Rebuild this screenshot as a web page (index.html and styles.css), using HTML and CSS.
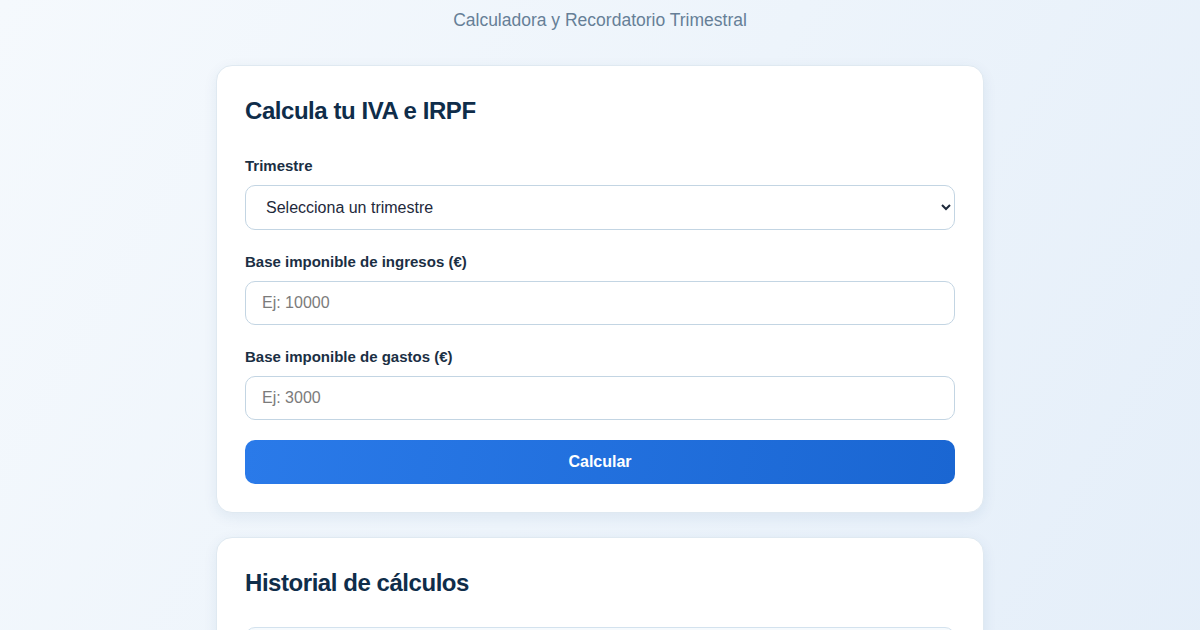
FILE: index.html
```html
<!DOCTYPE html>
<html lang="es">
<head>
    <meta charset="UTF-8">
    <meta name="viewport" content="width=device-width, initial-scale=1.0">
    <title>Calculadora IVA e IRPF</title>
    <link rel="stylesheet" href="styles.css">
</head>
<body>

<p class="subtitle">Calculadora y Recordatorio Trimestral</p>

<main class="container">
    <!-- Formulario de cálculo -->
    <section class="card">
        <h2 class="card-title">Calcula tu IVA e IRPF</h2>

        <div class="form-group">
            <label for="quarter">Trimestre</label>
            <select id="quarter" class="field">
                <option value="">Selecciona un trimestre</option>
                <option value="1">1T (enero - marzo)</option>
                <option value="2">2T (abril - junio)</option>
                <option value="3">3T (julio - septiembre)</option>
                <option value="4">4T (octubre - diciembre)</option>
            </select>
        </div>

        <div class="form-group">
            <label for="income">Base imponible de ingresos (€)</label>
            <input id="income" class="field" type="number" placeholder="Ej: 10000">
        </div>

        <div class="form-group last">
            <label for="expenses">Base imponible de gastos (€)</label>
            <input id="expenses" class="field" type="number" placeholder="Ej: 3000">
        </div>

        <button class="btn-primary" type="button">Calcular</button>
    </section>

    <!-- Historial -->
    <section class="card">
        <h2 class="card-title">Historial de cálculos</h2>
        <div class="history-empty">Todavía no hay cálculos guardados.</div>
    </section>
</main>

</body>
</html>
```

FILE: styles.css
```css
* {
    box-sizing: border-box;
}

body {
    font-family: "Liberation Sans", Arial, sans-serif;
    margin: 0;
    padding: 0;
    min-height: 100vh;
    color: #0f2d4a;
    background: linear-gradient(120deg, #f5f9fd 0%, #edf4fb 50%, #e4eef9 100%);
}

.subtitle {
    margin: 0;
    padding-top: 9px;
    text-align: center;
    font-size: 17.5px;
    line-height: 22px;
    color: #667f97;
}

.container {
    width: 768px;
    margin: 34px auto 0;
    display: flex;
    flex-direction: column;
    gap: 24px;
}

.card {
    background-color: #fff;
    border: 1px solid #dfe9f1;
    border-radius: 16px;
    padding: 30px 28px 28px;
    box-shadow: 0 4px 14px rgba(30, 80, 130, 0.08);
}

.card-title {
    margin: 0 0 29px;
    font-size: 24px;
    line-height: 30px;
    font-weight: bold;
    letter-spacing: -0.45px;
    color: #0f2d4a;
}

.form-group {
    margin-bottom: 21px;
}

.form-group.last {
    margin-bottom: 20px;
}

.form-group label {
    display: block;
    font-size: 15px;
    line-height: 22px;
    font-weight: bold;
    color: #1b2f44;
    margin-bottom: 8px;
}

.field {
    display: block;
    width: 100%;
    height: 44px;
    padding: 0 16px;
    font-family: "Liberation Sans", Arial, sans-serif;
    font-size: 16px;
    color: #1e293b;
    background-color: #fff;
    border: 1px solid #c3d5e3;
    border-radius: 10px;
}

select.field {
    height: 45px;
}

.field::placeholder {
    color: #7b7b7b;
}

.btn-primary {
    display: block;
    width: 100%;
    height: 44px;
    border: none;
    border-radius: 10px;
    font-family: "Liberation Sans", Arial, sans-serif;
    font-size: 16px;
    font-weight: bold;
    color: #fff;
    background: linear-gradient(100deg, #2a7ae9 0%, #1a66d2 100%);
    cursor: pointer;
}

.history-empty {
    padding: 18px 20px;
    border: 1px solid #d3e2ee;
    border-radius: 10px;
    background-color: #f6fafd;
    color: #667f97;
    font-size: 15px;
}
```
